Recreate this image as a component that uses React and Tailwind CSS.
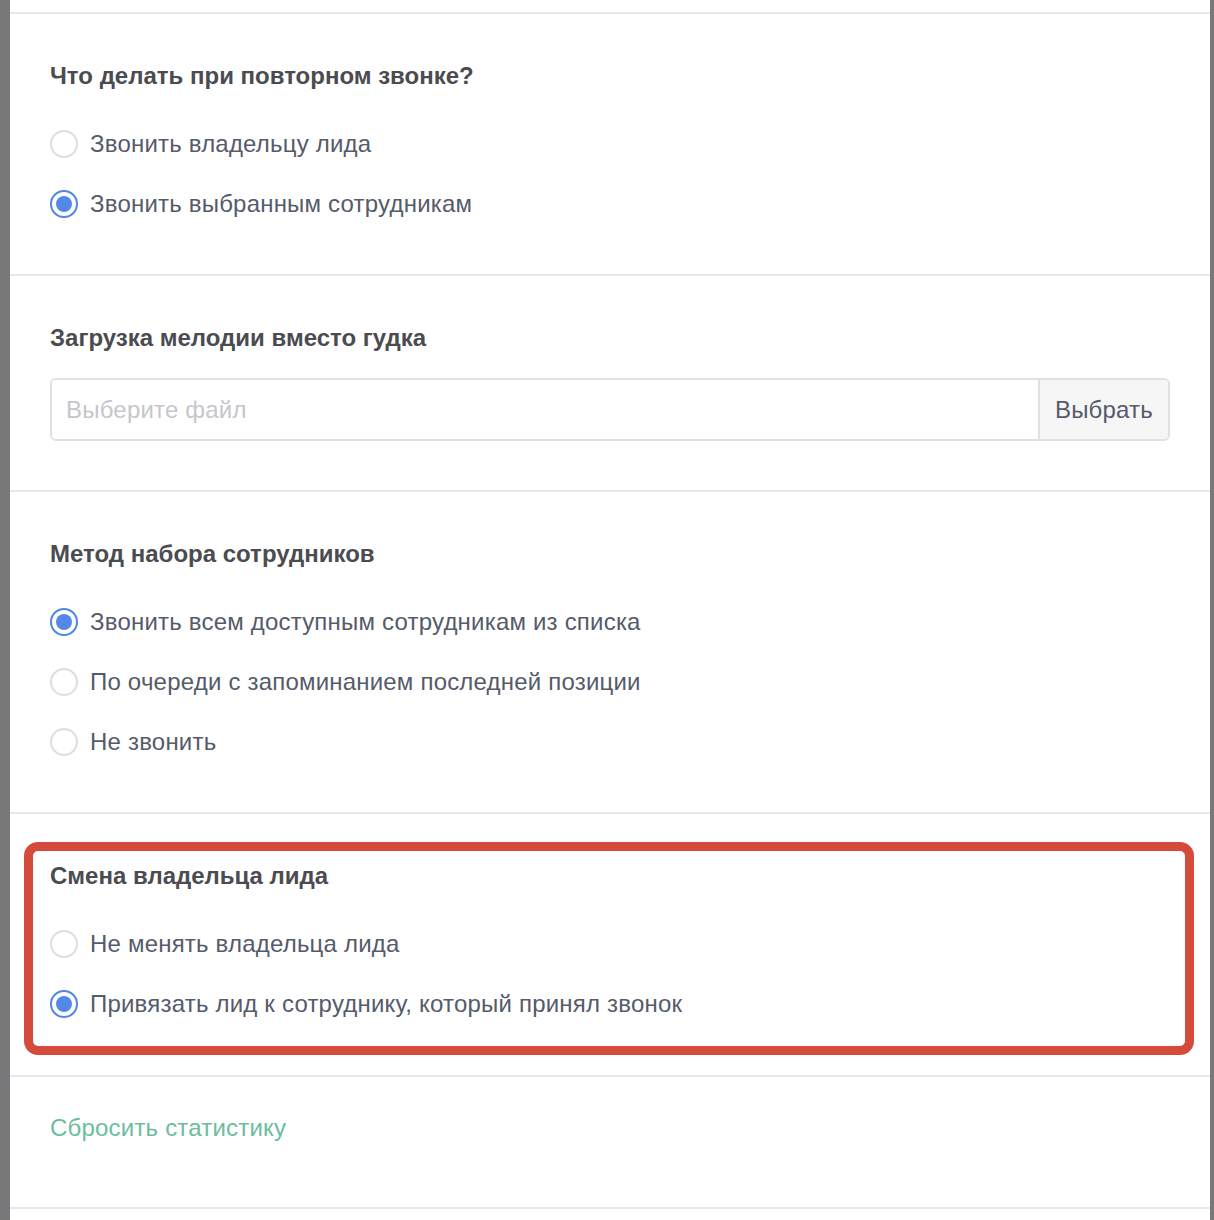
import React, { useState } from 'react';

const Radio = ({ checked, label, onSelect }) => (
  <label className="flex items-center h-[60px] cursor-pointer" onClick={onSelect}>
    {checked ? (
      <span className="w-[28px] h-[28px] rounded-full border-2 border-[#4f88e3] flex items-center justify-center shrink-0">
        <span className="w-[16px] h-[16px] rounded-full bg-[#5389e6]" />
      </span>
    ) : (
      <span className="w-[28px] h-[28px] rounded-full border-2 border-[#dedee2] shrink-0" />
    )}
    <span className="ml-[12px] text-[24px] tracking-[0.2px] text-[#555b6a]">{label}</span>
  </label>
);

const RadioGroup = ({ options, initial }) => {
  const [value, setValue] = useState(initial);
  return (
    <div className="mt-[23px]">
      {options.map((o, i) => (
        <Radio key={o} label={o} checked={value === i} onSelect={() => setValue(i)} />
      ))}
    </div>
  );
};

const Heading = ({ children }) => (
  <h3 className="text-[24px] leading-[30px] font-bold text-[#4b4c51]">{children}</h3>
);

export default function App() {
  return (
    <div className="min-h-[1220px] bg-white flex" style={{ fontFamily: '"Liberation Sans", Arial, sans-serif' }}>
      <div className="w-[10px] bg-[#78787b] shrink-0" />
      <div className="flex-1 pt-[12px]">
        <section className="border-t-2 border-[#e8e8ea] px-[40px] pt-[47px] pb-[40px]">
          <Heading>Что делать при повторном звонке?</Heading>
          <RadioGroup initial={1} options={['Звонить владельцу лида', 'Звонить выбранным сотрудникам']} />
        </section>

        <section className="border-t-2 border-[#e8e8ea] px-[40px] pt-[47px] pb-[49px]">
          <Heading>Загрузка мелодии вместо гудка</Heading>
          <div className="mt-[25px] flex h-[63px] border-2 border-[#e0e0e4] rounded-[6px] overflow-hidden">
            <input
              placeholder="Выберите файл"
              className="flex-1 px-[14px] text-[24px] tracking-[0.2px] text-[#555b6a] placeholder:text-[#c6c6cc] outline-none bg-white"
            />
            <button className="w-[130px] border-l-2 border-[#e0e0e4] bg-[#f6f6f7] text-[24px] tracking-[0.2px] text-[#555b6a]">Выбрать</button>
          </div>
        </section>

        <section className="border-t-2 border-[#e8e8ea] px-[40px] pt-[47px] pb-[40px]">
          <Heading>Метод набора сотрудников</Heading>
          <RadioGroup
            initial={0}
            options={[
              'Звонить всем доступным сотрудникам из списка',
              'По очереди с запоминанием последней позиции',
              'Не звонить',
            ]}
          />
        </section>

        <section className="relative border-t-2 border-[#e8e8ea] px-[40px] pt-[47px] pb-[41px]">
          <Heading>Смена владельца лида</Heading>
          <RadioGroup
            initial={1}
            options={['Не менять владельца лида', 'Привязать лид к сотруднику, который принял звонок']}
          />
          <div className="absolute left-[14px] right-[16px] top-[28px] bottom-[20px] border-[9px] border-[#d44b3c] rounded-[14px] pointer-events-none" />
        </section>

        <section className="border-t-2 border-[#e8e8ea] px-[40px] pt-[36px] pb-[64px]">
          <a href="#" className="block text-[24px] tracking-[0.2px] leading-[30px] text-[#6cbd9c]">Сбросить статистику</a>
        </section>

        <div className="border-t-2 border-[#e8e8ea]" />
      </div>
      <div className="w-[4px] bg-[#78787b] shrink-0" />
    </div>
  );
}
